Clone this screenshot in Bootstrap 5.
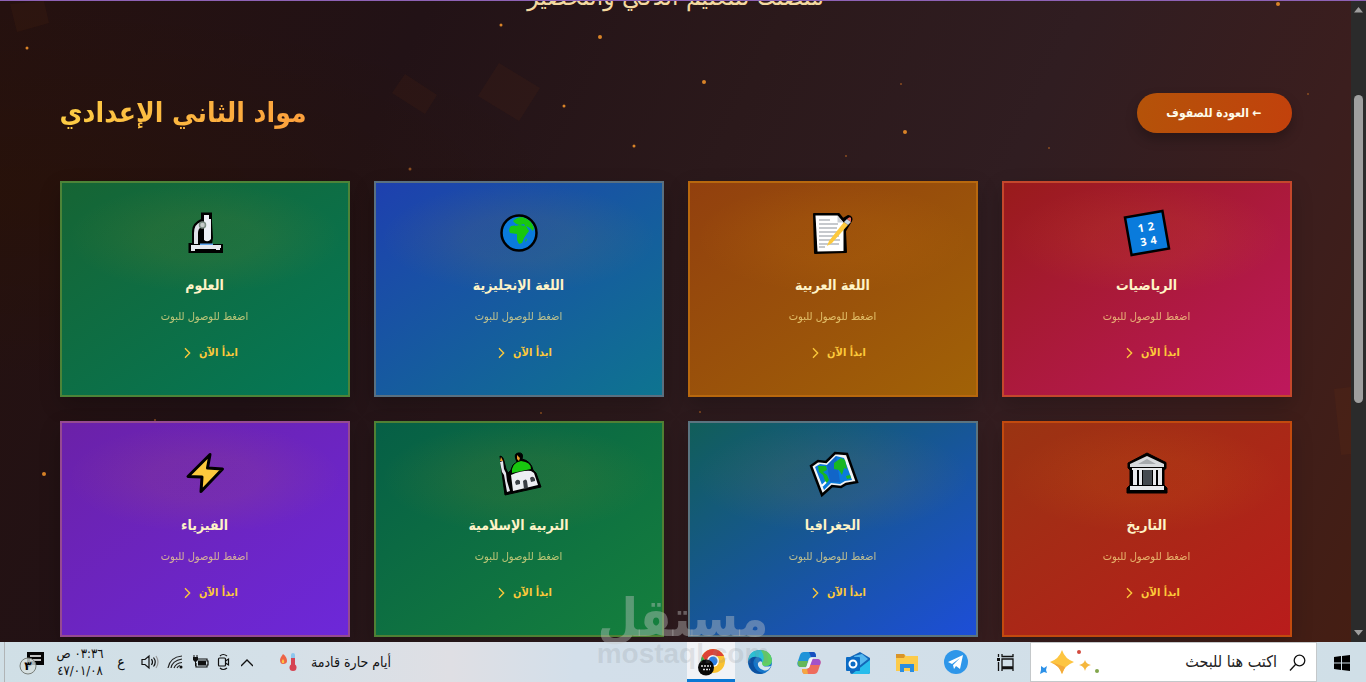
<!DOCTYPE html>
<html lang="ar" dir="rtl">
<head>
<meta charset="utf-8">
<meta name="viewport" content="width=device-width, initial-scale=1">
<title>مواد الثاني الإعدادي</title>
<link rel="stylesheet" href="https://cdn.jsdelivr.net/npm/bootstrap@5.3.0/dist/css/bootstrap.min.css">
<style>
  body { font-family: "DejaVu Sans Condensed", "DejaVu Sans", sans-serif; background: #d2dfe8; overflow: hidden; }
  .stage { border-top: 1px solid #8e62b5; min-height: 0; }
  .page-area {
    background:
      radial-gradient(ellipse at 0% 30%, rgba(44, 18, 0, .4), transparent 30%),
      linear-gradient(115deg, #25110f 0%, #221216 26%, #2b191b 48%, #301d21 66%, #3b1e1e 84%, #451e13 100%);
  }
  .sparks { inset: 0; width: 100%; height: 100%; pointer-events: none; }
  .page-inner { max-width: 1280px; padding: 0 24px; position: relative; }
  .tagline { margin: -23px 0 0; line-height: 36px; font-size: 26px; color: #f3d9a0; }
  .heading-row { margin: 79px 0 48px; height: 40px; }
  .heading-row h1 {
    margin: 0; font-size: 28px; line-height: 40px; font-weight: 700; color: transparent;
    background: linear-gradient(90deg, #fdcd45, #fb9f3c); -webkit-background-clip: text; background-clip: text;
  }
  .back-btn {
    width: 155px; height: 40px; padding: 0; border: 0; font-size: 12px; font-weight: 700; color: #fffbeb;
    background: linear-gradient(100deg, #b45309, #c2410c); box-shadow: 0 6px 12px rgba(0, 0, 0, .25);
  }
  .back-btn:hover { color: #fff; background: #c2410c; }
  .subject-grid { display: grid; grid-template-columns: repeat(4, 1fr); gap: 24px; }
  .subject {
    border: 2px solid var(--edge); padding: 24px 16px 32px; text-align: center;
    background:
      radial-gradient(ellipse 48% 26% at 50% 26%, rgba(245, 158, 11, .07) 40%, transparent),
      linear-gradient(145deg, var(--from), var(--to));
    box-shadow: 0 8px 20px rgba(0, 0, 0, .2);
  }
  .subject .pic { display: block; width: 52px; height: 52px; margin: 0 auto 12px; }
  .subject h2 { margin: 0 0 8px; font-size: 14px; line-height: 28px; font-weight: 700; color: #fef3c7; }
  .subject p { margin: 0 0 16px; font-size: 11px; line-height: 20px; color: #fde68a; opacity: .72; }
  .subject a { width: max-content; margin: 0 auto; height: 20px; font-size: 11px; line-height: 20px; font-weight: 700; color: #fcc93a; text-decoration: none; }
  .subject a span { margin-left: 4px; }
  .scroll-track { width: 15px; background: #2b2b2b; padding: 6px 3px; }
  .scroll-thumb { flex: 308; width: 9px; border-radius: 5px; background: #9f9f9f; }
  .taskbar { height: 40px; background: linear-gradient(90deg, #d0dfe6, #d4e0e8 20%, #dfdfe4 33%, #d3dfea 42%, #d0dfe7); color: #111; }
  .taskbar button { border: 0; background: none; padding: 0; height: 40px; flex: none; color: #111; }
  .taskbar .app-btn { width: 49px; }
  .taskbar .app-btn.running { width: 48px; background: #f1f3f7; border-bottom: 3px solid #0a78d4; padding-top: 3px; }
  .taskbar .task-view { width: 50px; }
  .search-box { width: 287px; height: 40px; background: #fff; border: 1px solid #c4c8ca; padding: 0 10px 0 8px; }
  .search-box input { border: 0; outline: 0; min-width: 0; font-size: 16px; color: #111; }
  .search-box input::placeholder { color: #222; opacity: 1; }
  .tray { font-size: 14px; }
  .clock { width: 58px; font-size: 13px; line-height: 17px; text-align: center; }
  .edge-line { width: 5px; border-right: 1px solid #b0b4b6; }
  .stamp { position: absolute; left: 0; right: 0; bottom: 14px; text-align: center; pointer-events: none; font-weight: 700; direction: ltr; }
  .stamp div:first-child { color: rgba(200, 200, 200, .4); font-size: 52px; line-height: 60px; }
  .stamp div:last-child { color: rgba(135, 140, 145, .2); font: 700 28px/28px "Liberation Sans", sans-serif; margin-top: -8px; }
</style>
</head>
<body class="vh-100 d-flex flex-column position-relative">

<div class="stage d-flex flex-grow-1" dir="ltr">
  <main class="page-area flex-grow-1 position-relative overflow-hidden" dir="rtl">
    <svg class="sparks position-absolute" viewBox="0 0 1351 641" preserveAspectRatio="xMidYMin slice" aria-hidden="true">
      <g fill="#b45a14" fill-opacity=".06">
        <path d="M10 3 44 0 49 22 17 31zM405 73 437 94 425 113 392 92zM499 62 540 87 519 120 478 95zM1334 388 1351 386V453L1341 454z"/>
      </g>
      <g fill="#d98328">
        <circle cx="27" cy="47" r="1.5"/><circle cx="501" cy="24" r="1.5"/><circle cx="600" cy="36" r="2"/><circle cx="704" cy="81" r="2"/>
        <circle cx="564" cy="105" r="1.5"/><circle cx="634" cy="145" r="1.5"/><circle cx="905" cy="131" r="2"/><circle cx="1278" cy="3" r="2"/>
        <circle cx="44" cy="473" r="2"/>
      </g>
      <g fill="#8a4d20">
        <circle cx="410" cy="168" r="1.5"/><circle cx="846" cy="155" r="1"/><circle cx="901" cy="83" r="1"/><circle cx="1049" cy="147" r="1"/>
        <circle cx="1308" cy="93" r="1"/><circle cx="155" cy="419" r="1"/><circle cx="541" cy="412" r="1"/><circle cx="700" cy="411" r="1"/>
      </g>
    </svg>

    <div class="page-inner mx-auto">
      <p class="tagline text-center">منصتك للتعليم الذكي والتحضير</p>
      <div class="heading-row d-flex justify-content-between align-items-center">
        <button type="button" class="btn rounded-pill back-btn">← العودة للصفوف</button>
        <h1>مواد الثاني الإعدادي</h1>
      </div>

      <div class="subject-grid">
        <article class="subject" style="--from:#991b1b;--to:#be185d;--edge:#c4472c">
          <svg class="pic" viewBox="0 0 52 52"><g transform="rotate(-10 26 26)"><rect x="7" y="7" width="38" height="38" fill="#0a7bdc" stroke="#000" stroke-width="2.500"/><g fill="#fff" font-family="Open Sans" font-size="11" font-weight="700" text-anchor="middle" direction="ltr"><text x="21" y="24">1</text><text x="31" y="24">2</text><text x="21" y="38">3</text><text x="31" y="38">4</text></g></g></svg>
          <h2>الرياضيات</h2><p>اضغط للوصول للبوت</p>
          <a href="#math" class="d-flex align-items-center"><span>ابدأ الآن</span><svg class="ms-2" width="16" height="16" viewBox="0 0 24 24" fill="none" stroke="currentColor" stroke-width="2"><path d="m9 5 7 7-7 7"/></svg></a>
        </article>

        <article class="subject" style="--from:#92400e;--to:#a16207;--edge:#b8680e">
          <svg class="pic" viewBox="0 0 52 52"><path d="M7 7h25l4 5 5-3q5 1 3 5L38 24l1 21-31 1z" fill="#000" stroke="#000" stroke-width="2" stroke-linejoin="round"/><path d="M8.500 8.500h22l6 7V44l-26 .5z" fill="#fff"/><path d="m30.500 8.500 6 7h-6z" fill="#c9ced3"/><path d="M12 13h11M12 17h19M12 21h18M12 25h21M12 29h20M12 33h21M12 37h20M12 40h6" stroke="#8d949b" stroke-width="1.200"/><path d="m20 39 2-5L37 15l4 3-16 18z" fill="#fdc93d"/><path d="m37 15 3-3 4 3-3 3z" fill="#c9d5dc"/><path d="m40 12q3-3 4-1v4z" fill="#e86b5a"/></svg>
          <h2>اللغة العربية</h2><p>اضغط للوصول للبوت</p>
          <a href="#arabic" class="d-flex align-items-center"><span>ابدأ الآن</span><svg class="ms-2" width="16" height="16" viewBox="0 0 24 24" fill="none" stroke="currentColor" stroke-width="2"><path d="m9 5 7 7-7 7"/></svg></a>
        </article>

        <article class="subject" style="--from:#1e40af;--to:#0e7490;--edge:#5a7080">
          <svg class="pic" viewBox="0 0 52 52"><circle cx="26" cy="26" r="17.500" fill="#0a7bdc" stroke="#000" stroke-width="2.500"/><path d="M20 14q4-4 9-4 9 2 12 11l-1 3-3-3-4-2 3 5-3 4-2 3-2 5-3 1-2-4v-6l-7-1q-2-4 1-7l7-1-3-2z" fill="#18c70f"/><path d="m22 17 5 1 4-1 1 2-5-1-5 1z" fill="#0a7bdc"/><path d="m33 31 1 2-2 2z" fill="#18c70f"/></svg>
          <h2>اللغة الإنجليزية</h2><p>اضغط للوصول للبوت</p>
          <a href="#english" class="d-flex align-items-center"><span>ابدأ الآن</span><svg class="ms-2" width="16" height="16" viewBox="0 0 24 24" fill="none" stroke="currentColor" stroke-width="2"><path d="m9 5 7 7-7 7"/></svg></a>
        </article>

        <article class="subject" style="--from:#166534;--to:#047857;--edge:#4d8438">
          <svg class="pic" viewBox="0 0 52 52"><path d="M22 5.500h11V15l1 16-1 6h11v9H9.500V36H13V24q0-8 9-12z" fill="#000"/><path d="M25 8h5v4h2v20q-3 4-7 1z" fill="#edf0f5"/><path d="M22 15v5q-3 2-3 6v11h-4V26q0-9 7-11z" fill="#dfe1e8"/><path d="M12 38h30v3h-1v2h-4v-1H16v2h-4z" fill="#e6e8ee"/><path d="M21 36.500h13V38H21z" fill="#62a7ee"/><circle cx="23.500" cy="18" r="3" fill="#c5cac8" stroke="#7d8d84" stroke-width="1.500"/></svg>
          <h2>العلوم</h2><p>اضغط للوصول للبوت</p>
          <a href="#science" class="d-flex align-items-center"><span>ابدأ الآن</span><svg class="ms-2" width="16" height="16" viewBox="0 0 24 24" fill="none" stroke="currentColor" stroke-width="2"><path d="m9 5 7 7-7 7"/></svg></a>
        </article>

        <article class="subject" style="--from:#9a3412;--to:#b91c1c;--edge:#c24a0e">
          <svg class="pic" viewBox="0 0 52 52"><path d="M26 6 45 15.500v6L43 23v15l3 3v5H6v-5l3-3V23l-2-2v-5z" fill="#000" stroke="#000" stroke-linejoin="round"/><path d="M26 9 43 17v3H9v-3z" fill="#d8dbde"/><path d="m26 12 9 5H17z" fill="#a7abae"/><path d="M11 21h30v2H11zM12 23h4v15h-4zm6 0h3v15h-3zm14 0h3v15h-3zm5 0h4v15h-4zM9 39h34v4H9z" fill="#e8eaec"/><path d="M22 23h9v15h-9z" fill="#454b50"/></svg>
          <h2>التاريخ</h2><p>اضغط للوصول للبوت</p>
          <a href="#history" class="d-flex align-items-center"><span>ابدأ الآن</span><svg class="ms-2" width="16" height="16" viewBox="0 0 24 24" fill="none" stroke="currentColor" stroke-width="2"><path d="m9 5 7 7-7 7"/></svg></a>
        </article>

        <article class="subject" style="--from:#115e59;--to:#1d4ed8;--edge:#5b7480">
          <svg class="pic" viewBox="0 0 52 52"><path d="m4 19 7-5 8 1 9-9 12 1 10 28-11 2-5 3-9-1-10 9z" fill="#f2f4f5" stroke="#000" stroke-width="2.500"/><path d="m8 20 5-3 7 1 9-9 8 2 8 22-7 1-5 3-9-1-7 7z" fill="#0a7bdc"/><path d="m20 18 9-9 4 26-10 0z" fill="#1556bb" opacity=".6"/><path d="m11 19 8 0 1 4-4 2 4 3 2 5-3 4-3-9-4-3zM27 16l7-5 4 2 2 9-3-1-2 7-3-5-5-1zM39 29l4-1 1 3-4 1z" fill="#18b720"/><path d="m15 39 4-4" stroke="#fff" stroke-width="2"/></svg>
          <h2>الجغرافيا</h2><p>اضغط للوصول للبوت</p>
          <a href="#geography" class="d-flex align-items-center"><span>ابدأ الآن</span><svg class="ms-2" width="16" height="16" viewBox="0 0 24 24" fill="none" stroke="currentColor" stroke-width="2"><path d="m9 5 7 7-7 7"/></svg></a>
        </article>

        <article class="subject" style="--from:#065f46;--to:#15803d;--edge:#508034">
          <svg class="pic" viewBox="0 0 52 52"><path d="M7 9q3 0 4 5l2 8 2 4 3-3q1-6 6-8-4-8 1-9 6-1 4 6 9 2 11 11l3 3 5 14-36 8-3-22z" fill="#000" stroke="#000" stroke-linejoin="round"/><path d="M19 26q-1-10 9-12 10 1 10 8z" fill="#18c70f"/><path d="M18 28q12-5 20-4l3 2 4 12-25 6z" fill="#edeef3"/><path d="m7 15 3-1 1 8 2 4 1 8 3 10-3 1-3-17-2-3z" fill="#e3e5ec"/><path d="m7 14 1-4 2 4zM24 8l3 3-1 3-2-2z" fill="#e99c2d"/><path d="M22 35q2-4 5-1v3l-4 1zm15-4q3-3 5 1v2l-4 1zM30 34q3-3 4 0l1 7-4 1z" fill="#3c4046"/></svg>
          <h2>التربية الإسلامية</h2><p>اضغط للوصول للبوت</p>
          <a href="#islamic" class="d-flex align-items-center"><span>ابدأ الآن</span><svg class="ms-2" width="16" height="16" viewBox="0 0 24 24" fill="none" stroke="currentColor" stroke-width="2"><path d="m9 5 7 7-7 7"/></svg></a>
        </article>

        <article class="subject" style="--from:#6b21a8;--to:#6d28d9;--edge:#964a90">
          <svg class="pic" viewBox="0 0 52 52"><path d="M31 7.500 9 29.500l14 .5-1 14.500L43.500 22l-15-1z" fill="#fdc93d" stroke="#000" stroke-width="3" stroke-linejoin="round"/></svg>
          <h2>الفيزياء</h2><p>اضغط للوصول للبوت</p>
          <a href="#physics" class="d-flex align-items-center"><span>ابدأ الآن</span><svg class="ms-2" width="16" height="16" viewBox="0 0 24 24" fill="none" stroke="currentColor" stroke-width="2"><path d="m9 5 7 7-7 7"/></svg></a>
        </article>
      </div>
    </div>
  </main>

  <div class="scroll-track d-flex flex-column" aria-hidden="true">
    <svg width="9" height="6"><path d="M0 5.500 4.500 0 9 5.500z" fill="#9f9f9f"/></svg>
    <div style="flex:82"></div>
    <div class="scroll-thumb"></div>
    <div style="flex:227"></div>
    <svg width="9" height="6"><path d="M0 0 4.500 5.500 9 0z" fill="#9f9f9f"/></svg>
  </div>
</div>

<footer class="taskbar d-flex align-items-center flex-shrink-0">
  <button type="button" class="app-btn" aria-label="ابدأ"><svg width="16" height="16" viewBox="0 0 16 16"><path d="M0 2 7 1v6.500H0zM8 1l8-1v7.500H8zM0 8.500h7V15l-7-1zM8 8.500h8V16l-8-1z"/></svg></button>
  <div class="search-box d-flex align-items-center">
    <svg width="17" height="17" viewBox="0 0 17 17" fill="none" stroke="#111" stroke-width="1.300" class="flex-shrink-0"><circle cx="10.500" cy="6.500" r="5.300"/><path d="M6.700 10.300 1 16.500"/></svg>
    <input type="text" aria-label="بحث" placeholder="اكتب هنا للبحث" class="flex-grow-1 pe-2 ps-3 me-1">
    <svg width="62" height="26" viewBox="0 0 62 26" class="flex-shrink-0"><path d="M23 1q3 9 12 12-9 3-12 12-3-9-12-12 9-3 12-12z" fill="#fdc541"/><path d="M11 13q9 3 12 12l3-7q-7-3-15-5z" fill="#f3a93a"/><path d="M46 11q1 4 6 5-5 1-6 6-1-5-6-6 5-1 6-5z" fill="#f5b73d"/><path d="m2 17 3 2 3-2-1 4 1 3-3-1-4 2 1-4z" fill="#2c91e8"/><circle cx="40" cy="3" r="2" fill="#d34a3e"/><circle cx="58" cy="22" r="2" fill="#82a64c"/></svg>
  </div>
  <button type="button" class="task-view" aria-label="عرض المهام"><svg width="17" height="17" viewBox="0 0 17 17" fill="none" stroke="#111" stroke-width="1.300"><path d="M5 5h11v8H5zM5 0v2.500h11V0M5 17v-2.500h11V17M1.500 0v3M1.500 8v9"/><path d="M0 4h3v3H0z" fill="#111" stroke="none"/></svg></button>
  <button type="button" class="app-btn" aria-label="Telegram"><svg width="24" height="24" viewBox="0 0 24 24"><circle cx="12" cy="12" r="12" fill="#2e96e9"/><path d="m4 12 15-7-3 14-4-3-2 3-1-4 7-7-8 6z" fill="#fff"/></svg></button>
  <button type="button" class="app-btn" aria-label="Explorer"><svg width="22" height="20" viewBox="0 0 22 20"><path d="M0 1h8l2 2h12v15H0z" fill="#fccb4a"/><path d="M0 1h8l1 2-1 2H0z" fill="#d99428"/><path d="M4 19v-8h14v8h-4v-4H8v4z" fill="#2b8de0"/></svg></button>
  <button type="button" class="app-btn" aria-label="Outlook"><svg width="24" height="22" viewBox="0 0 24 22"><path d="m4 5 10-5 10 6v14q0 2-2 2H6q-2 0-2-2z" fill="#1366b7"/><path d="m8 4 8-2 6 5-10 8z" fill="#56b8ef"/><path d="M24 8v12q0 2-2 2H6z" fill="#28bdec"/><rect y="5" width="14" height="14" rx="1" fill="#0b6bc5"/><circle cx="7" cy="12" r="3.500" fill="none" stroke="#fff" stroke-width="2"/></svg></button>
  <button type="button" class="app-btn" aria-label="Copilot"><svg width="24" height="22" viewBox="0 0 24 22"><path d="M7 0h9q3 0 3 5h-4q-3 0-4 4l-2 6H3q-4-1-2-6l2-6q1-3 4-3z" fill="#1f93d8"/><path d="M12 0h4q3 0 3 5h-5z" fill="#174fc0"/><path d="M1 9h10l-2 6H3q-3-1-2-6z" fill="#65b75a"/><path d="M17 22H8q-3 0-3-5h4q3 0 4-4l2-6h6q4 1 2 6l-2 6q-1 3-4 3z" fill="#ee6c5d"/><path d="M15 7h6q4 1 2 6H13z" fill="#a452c9"/><path d="M5 17h5l1 5H8q-3 0-3-5z" fill="#f5a741"/><path d="m13 6 3 0-4 10-3 0z" fill="#f4f3fa"/></svg></button>
  <button type="button" class="app-btn" aria-label="Edge"><svg width="24" height="24" viewBox="0 0 24 24"><circle cx="12" cy="12" r="12" fill="#1575c9"/><path d="M0 11Q1 0 12 0q11 1 12 10 0 6-7 6-4 0-3-3 1-6-6-6-6 0-8 4z" fill="#2cbfd3"/><path d="M13 0q10 1 11 10 0 6-7 6-4 0-3-3 4-5-1-13z" fill="#5fcf62"/><path d="M14 12q-1 6 9 4-3 6-8 4-6-2-5-7 2-3 4-1z" fill="#d5e5ee"/><path d="M0 12q3-6 9-5-5 3-3 9 3 7 10 7-13 4-16-11z" fill="#0c509f"/></svg></button>
  <button type="button" class="app-btn running" aria-label="Chrome"><svg width="27" height="27" viewBox="0 0 27 27"><circle cx="15" cy="12" r="12" fill="#fac231"/><path d="M4 7Q8 0 15 0t11 7H15l-5 8z" fill="#dc4337"/><path d="m4 7 6 9 5 3-3 5Q-1 20 4 7z" fill="#36a652"/><circle cx="15" cy="12" r="6" fill="#fff"/><circle cx="15" cy="12" r="4.500" fill="#2d7fe2"/><circle cx="8" cy="18.500" r="8" fill="#080808"/><path d="M3 17h10M5 20.500h7" stroke="#ddd" stroke-width="1.300" stroke-dasharray="2 1"/></svg></button>

  <div class="flex-grow-1"></div>

  <div class="tray d-flex align-items-center" dir="ltr">
    <div class="edge-line align-self-stretch"></div>
    <button type="button" class="ps-2" style="width:46px" aria-label="الإشعارات"><svg width="28" height="28" viewBox="0 0 28 28"><path d="M9 4h17v13H14l-5 3z" fill="#050505"/><path d="M12 8h11M12 12h11" stroke="#fff" stroke-width="1.500"/><circle cx="10" cy="18" r="8" fill="#d6dedf" fill-opacity=".8" stroke="#777d78"/><text x="10" y="22" text-anchor="middle" font-size="12" font-weight="700" font-family="DejaVu Sans">٣</text></svg></button>
    <div class="clock" dir="rtl">٠٣:٣٦ ص<br><bdo dir="ltr">٤٧/٠١/٠٨</bdo></div>
    <span class="text-center" style="width:24px">ع</span>
    <svg class="ms-2" width="18" height="16" viewBox="0 0 18 16" fill="none" stroke="#111" stroke-width="1.200"><path d="M1 5.500h3L8 2v12l-4-3.500H1zM10.500 5q2 3 0 6M12.500 3.500q3.500 4.500 0 9"/><path d="M15 2q4 6 0 12" stroke="#999"/></svg>
    <svg class="ms-2" width="17" height="14" viewBox="-2 0 17 14" fill="none" stroke="#222" stroke-width="1.200"><path d="M-1 13Q1 2 13 1M2 13q1-7 11-9M5 13q2-5 8-5.500M8 13q1-2 3-2.500"/><circle cx="12" cy="12" r="1.500" fill="#111" stroke="none"/></svg>
    <svg class="ms-2" width="17" height="14" viewBox="0 0 17 14"><path d="M5 4h10v2h1v4h-1v2H4V8" fill="none" stroke="#111" stroke-width="1.200"/><path d="M6 5.500h8v5H6zM1 2h5v3L4 7v4H3V7L1 5zM1.500 0h1v3h-1zM4.500 0h1v3h-1z" fill="#111"/></svg>
    <svg class="ms-2" width="14" height="18" viewBox="0 0 14 18" fill="none" stroke="#111" stroke-width="1.200"><rect x="1.500" y="5" width="7" height="8" rx="1"/><path d="m8.500 8 3-2v6l-3-2M3 3q3-3 7 0M3 15q3 3 7 0"/></svg>
    <button type="button" style="width:32px" aria-label="إظهار الرموز"><svg width="12" height="8" viewBox="0 0 12 8" fill="none" stroke="#111" stroke-width="1.400"><path d="m0 7 6-6 6 6"/></svg></button>
    <svg class="ms-3 me-2" width="20" height="20" viewBox="0 0 20 20"><path d="M4 2q4 3 4 7 0 3-4 3Q1 12 1 8q0-2 3-6z" fill="#ed6447"/><path d="M4 7q2 2 1 4H3q-1-2 1-4z" fill="#fdc541"/><rect x="12" y="1" width="4" height="14" rx="2" fill="#8dc6ed"/><path d="M12 6h4v8H12z" fill="#d64352"/><circle cx="14" cy="15.500" r="3.500" fill="#d64352"/></svg>
    <span dir="rtl" class="text-nowrap ms-1">أيام حارة قادمة</span>
  </div>
</footer>

<div class="stamp" aria-hidden="true"><div>مستقل</div><div>mostaql.com</div></div>
<script src="https://cdn.jsdelivr.net/npm/bootstrap@5.3.0/dist/js/bootstrap.bundle.min.js"></script>
</body>
</html>
